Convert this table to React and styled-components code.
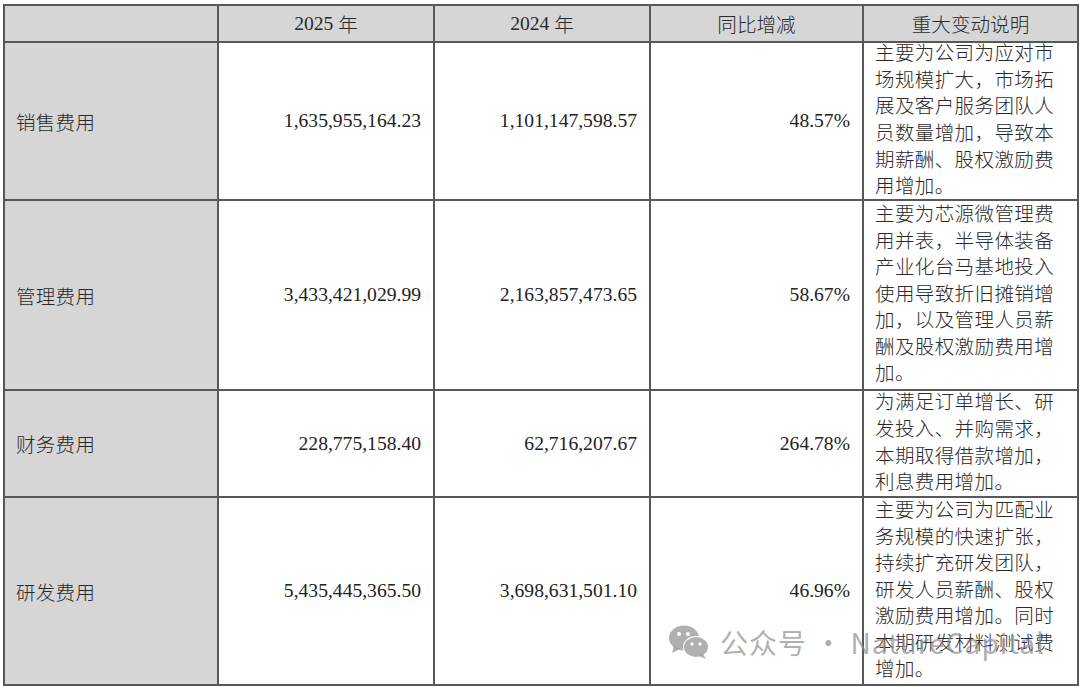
import React from "react";
import styled, { createGlobalStyle } from "styled-components";

const Global = createGlobalStyle`
  html, body { margin: 0; padding: 0; background: #fff; }
  body { width: 1080px; height: 687px; overflow: hidden; }
`;

const Page = styled.div`
  position: relative;
  width: 1080px;
  height: 687px;
  padding: 4px 0 0 3px;
  box-sizing: border-box;
  font-family: "Liberation Serif", "Noto Sans CJK SC", serif;
  color: #222;
`;

const Table = styled.div`
  display: grid;
  grid-template-columns: 214px 216px 216px 213px 215px;
  grid-template-rows: 37px 158px 190px 107px 188px;
  border-top: 2px solid #585858;
  border-left: 2px solid #585858;
  width: fit-content;
`;

const Cell = styled.div`
  box-sizing: border-box;
  border-right: 2px solid #585858;
  border-bottom: 2px solid #585858;
  background: ${(p) => (p.$shade ? "#d6d6d6" : "#fff")};
  display: flex;
  align-items: center;
  justify-content: ${(p) =>
    p.$align === "right" ? "flex-end" : p.$align === "center" ? "center" : "flex-start"};
  padding: ${(p) => (p.$align === "right" ? "0 12px 0 0" : "0 0 0 11px")};
  font-size: 19.6px;
  white-space: nowrap;
  overflow: visible;
`;

const HeadCell = styled(Cell)`
  padding: 0;
  font-size: 19.6px;
  color: #2a2a2a;
`;

const Label = styled.span`
  font-size: 19.5px;
  font-weight: 300;
  letter-spacing: 0.3px;
  color: #2a2a2a;
`;

const CJK = styled.span`
  font-weight: 300;
`;

const Note = styled.div`
  display: flex;
  flex-direction: column;
  font-size: 19.5px;
  line-height: 26.6px;
  font-weight: 300;
  letter-spacing: 0.4px;
  color: #2a2a2a;
`;

const Watermark = styled.div`
  position: absolute;
  left: 668px;
  top: 622px;
  display: flex;
  align-items: center;
  gap: 10px;
  color: rgba(140, 140, 140, 0.7);
  font-family: "Noto Sans CJK SC", "Noto Sans", sans-serif;
  font-size: 28px;
  letter-spacing: 1px;
  white-space: nowrap;
  pointer-events: none;
`;

const rows = [
  {
    label: "销售费用",
    y25: "1,635,955,164.23",
    y24: "1,101,147,598.57",
    pct: "48.57%",
    note: [
      "主要为公司为应对市",
      "场规模扩大，市场拓",
      "展及客户服务团队人",
      "员数量增加，导致本",
      "期薪酬、股权激励费",
      "用增加。",
    ],
  },
  {
    label: "管理费用",
    y25: "3,433,421,029.99",
    y24: "2,163,857,473.65",
    pct: "58.67%",
    note: [
      "主要为芯源微管理费",
      "用并表，半导体装备",
      "产业化台马基地投入",
      "使用导致折旧摊销增",
      "加，以及管理人员薪",
      "酬及股权激励费用增",
      "加。",
    ],
  },
  {
    label: "财务费用",
    y25: "228,775,158.40",
    y24: "62,716,207.67",
    pct: "264.78%",
    note: ["为满足订单增长、研", "发投入、并购需求，", "本期取得借款增加，", "利息费用增加。"],
  },
  {
    label: "研发费用",
    y25: "5,435,445,365.50",
    y24: "3,698,631,501.10",
    pct: "46.96%",
    note: [
      "主要为公司为匹配业",
      "务规模的快速扩张，",
      "持续扩充研发团队，",
      "研发人员薪酬、股权",
      "激励费用增加。同时",
      "本期研发材料测试费",
      "增加。",
    ],
  },
];

function WeChatIcon() {
  return (
    <svg width="42" height="36" viewBox="0 0 42 36">
      <ellipse cx="16" cy="14" rx="15" ry="12.5" fill="rgba(150,150,150,0.75)" />
      <path d="M6 22 L4 29 L12 25 Z" fill="rgba(150,150,150,0.75)" />
      <ellipse cx="28" cy="23" rx="13" ry="11" fill="#fff" />
      <ellipse cx="28" cy="23" rx="12" ry="10" fill="rgba(150,150,150,0.75)" />
      <path d="M35 30 L38 35 L31 32 Z" fill="rgba(150,150,150,0.75)" />
      <circle cx="11" cy="10" r="2" fill="#fff" />
      <circle cx="20" cy="10" r="2" fill="#fff" />
      <circle cx="24" cy="20" r="1.7" fill="#fff" />
      <circle cx="32" cy="20" r="1.7" fill="#fff" />
    </svg>
  );
}

export default function App() {
  return (
    <Page>
      <Global />
      <Table>
        <HeadCell $shade $align="center" />
        <HeadCell $shade $align="center">
          2025 <CJK>&nbsp;年</CJK>
        </HeadCell>
        <HeadCell $shade $align="center">
          2024 <CJK>&nbsp;年</CJK>
        </HeadCell>
        <HeadCell $shade $align="center">
          <CJK>同比增减</CJK>
        </HeadCell>
        <HeadCell $shade $align="center">
          <CJK>重大变动说明</CJK>
        </HeadCell>
        {rows.map((r) => (
          <React.Fragment key={r.label}>
            <Cell $shade>
              <Label>{r.label}</Label>
            </Cell>
            <Cell $align="right">{r.y25}</Cell>
            <Cell $align="right">{r.y24}</Cell>
            <Cell $align="right">{r.pct}</Cell>
            <Cell>
              <Note>
                {r.note.map((l, i) => (
                  <span key={i}>{l}</span>
                ))}
              </Note>
            </Cell>
          </React.Fragment>
        ))}
      </Table>
      <Watermark>
        <WeChatIcon />
        <span>公众号 · NatureCapital</span>
      </Watermark>
    </Page>
  );
}
